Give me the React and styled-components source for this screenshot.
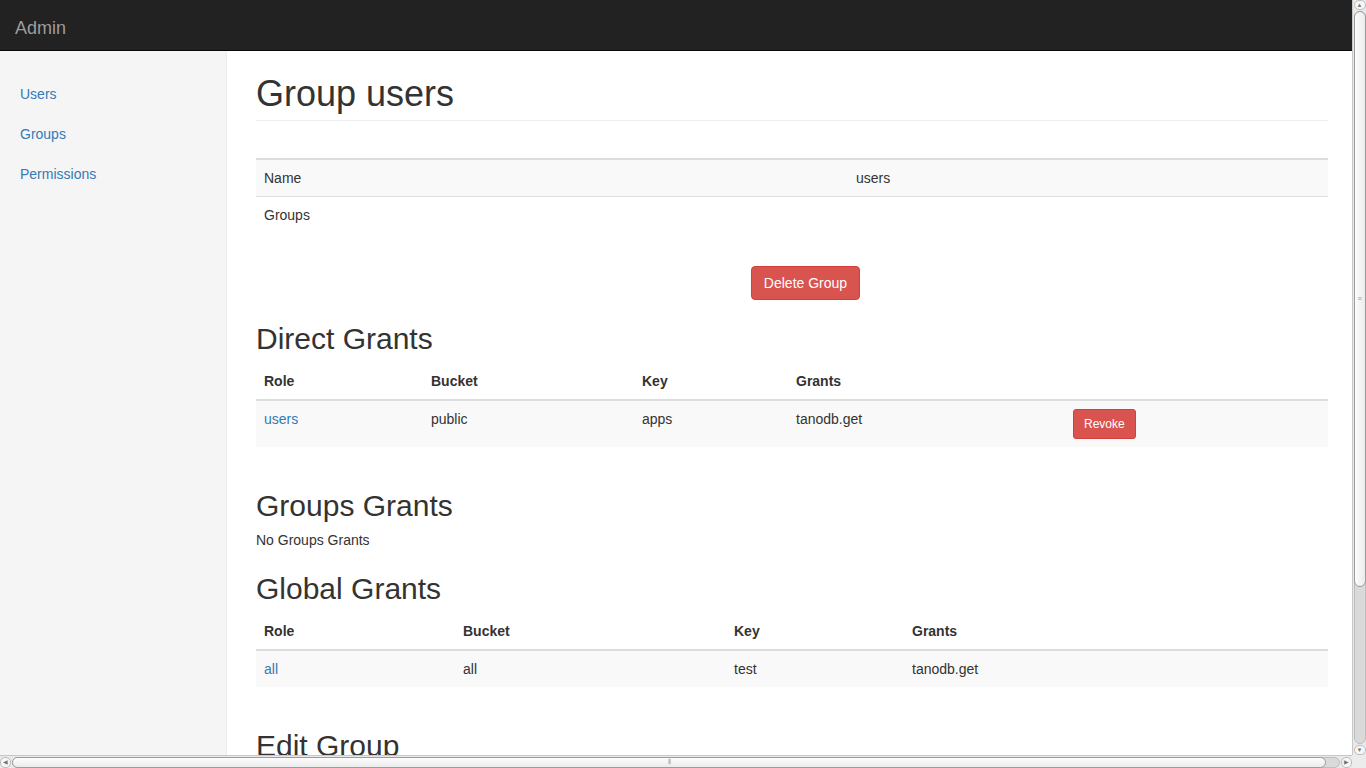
import React from 'react'
import styled, { createGlobalStyle } from "styled-components";

const GlobalStyle = createGlobalStyle`
  html, body {
    margin: 0;
    padding: 0;
    overflow: hidden;
  }
  body {
    font-family: "Liberation Sans", Helvetica, Arial, sans-serif;
    font-size: 14px;
    line-height: 1.42857143;
    color: #333;
    background: #fff;
  }
  * {
    box-sizing: border-box;
  }
`;

const Viewport = styled.div`
  height: 100vh;
  width: 100vw;
  overflow: hidden;
  position: relative;
`;

/* browser scrollbars, drawn over the page */
const ScrollV = styled.div`
  position: fixed;
  top: 0;
  right: 0;
  width: 14px;
  height: 755px;
  background: #e9e9e9;
  border-left: 1px solid #c8c8c8;
  display: flex;
  flex-direction: column;
  align-items: center;
`;

const ScrollH = styled.div`
  position: fixed;
  left: 0;
  bottom: 0;
  width: 1352px;
  height: 13px;
  background: #e9e9e9;
  border-top: 1px solid #c8c8c8;
  display: flex;
  align-items: center;
`;

const Corner = styled.div`
  position: fixed;
  right: 0;
  bottom: 0;
  width: 14px;
  height: 13px;
  background: #ececec;
`;

const Arrow = styled.div`
  flex-shrink: 0;
  width: ${p => (p.$h ? "11px" : "12px")};
  height: ${p => (p.$h ? "11px" : "10px")};
  display: flex;
  align-items: center;
  justify-content: center;
  font-size: 6px;
  line-height: 1;
  color: #777;
  background: #f6f6f6;
  border: 1px solid #bdbdbd;
  border-radius: 5px;
`;

const Track = styled.div`
  flex: 1;
  display: flex;
  flex-direction: ${p => (p.$h ? "row" : "column")};
  width: ${p => (p.$h ? "auto" : "12px")};
  height: ${p => (p.$h ? "11px" : "auto")};
  background: #dadada;
  border: 1px solid #bdbdbd;
  border-radius: 6px;
  margin: ${p => (p.$h ? "0 1px" : "1px 0")};
`;

const Thumb = styled.div`
  flex-shrink: 0;
  display: flex;
  align-items: center;
  justify-content: center;
  font-size: 7px;
  color: #999;
  background: ${p => (p.$h
    ? "linear-gradient(to bottom, #fdfdfd, #ebebeb)"
    : "linear-gradient(to right, #fdfdfd, #ebebeb)")};
  border: 1px solid #9c9c9c;
  border-radius: 6px;
  margin: -1px;
`;

const Navbar = styled.div`
  width: 1366px;
  height: 51px;
  background: #222;
  border-bottom: 1px solid #080808;
  padding: 18px 15px 0;
`;

const Brand = styled.a`
  display: block;
  font-size: 18px;
  line-height: 20px;
  color: #9d9d9d;
  text-decoration: none;
`;

const Layout = styled.div`
  display: flex;
  width: 1366px;
  min-height: 940px;
`;

const Sidebar = styled.div`
  width: 227px;
  flex-shrink: 0;
  background: #f5f5f5;
  border-right: 1px solid #eee;
  padding: 23px 0 20px;
`;

const NavList = styled.ul`
  list-style: none;
  margin: 0;
  padding: 0;
`;

const NavLink = styled.a`
  display: block;
  padding: 10px 20px;
  color: #337ab7;
  text-decoration: none;
`;

const Main = styled.div`
  flex: 1;
  display: flex;
  flex-direction: column;
  padding: 20px 38px 60px 29px;
`;

const PageHeader = styled.h1`
  margin: 0 0 20px;
  padding: 3px 0 6px;
  border-bottom: 1px solid #eee;
  font-size: 36px;
  font-weight: 500;
  line-height: 1.1;
`;

const Heading = styled.h2`
  margin: 20px 0 8px;
  padding-top: 2px;
  font-size: 30px;
  font-weight: 500;
  line-height: 1.1;
`;

const Table = styled.table`
  width: 100%;
  table-layout: fixed;
  border-collapse: collapse;
  border-spacing: 0;
  margin: ${p => p.$top || 0}px 0 20px;
  border-top: ${p => (p.$ruled ? "2px solid #ddd" : "0")};
`;

const Th = styled.th`
  padding: 8px;
  text-align: left;
  font-weight: bold;
  line-height: 20px;
  border-bottom: 2px solid #ddd;
`;

const Row = styled.tr`
  background: ${p => (p.$striped ? "#f9f9f9" : "transparent")};
`;

const Td = styled.td`
  padding: 8px;
  line-height: 20px;
  vertical-align: top;
  border-top: ${p => (p.$first ? "0" : "1px solid #ddd")};
`;

const Link = styled.a`
  color: #337ab7;
  text-decoration: none;
`;

const ActionRow = styled.div`
  display: flex;
  justify-content: center;
  padding-left: 27px;
  margin-top: 13px;
`;

const Button = styled.button`
  font-family: inherit;
  color: #fff;
  background: #d9534f;
  border: 1px solid #d43f3a;
  border-radius: ${p => (p.$small ? 3 : 4)}px;
  font-size: ${p => (p.$small ? 12 : 14)}px;
  line-height: ${p => (p.$small ? 1.5 : 1.42857143)};
  padding: ${p => (p.$small ? "5px 10px" : "6px 12px")};
  cursor: pointer;
`;

const Note = styled.p`
  margin: 0;
`;

const Form = styled.form`
  display: flex;
  flex-direction: column;
  gap: 15px;
`;

const Label = styled.label`
  font-weight: bold;
  display: block;
  margin-bottom: 5px;
`;

const Input = styled.input`
  display: block;
  width: 100%;
  height: 34px;
  padding: 6px 12px;
  font-size: 14px;
  font-family: inherit;
  color: #555;
  border: 1px solid #ccc;
  border-radius: 4px;
`;

const SaveButton = styled.button`
  align-self: flex-start;
  font-family: inherit;
  font-size: 14px;
  padding: 6px 12px;
  color: #fff;
  background: #337ab7;
  border: 1px solid #2e6da4;
  border-radius: 4px;
`;

const directGrants = [
  { role: "users", bucket: "public", key: "apps", grants: "tanodb.get" },
];

const globalGrants = [
  { role: "all", bucket: "all", key: "test", grants: "tanodb.get" },
];

const Scrollbars = () => (
  <>
    <ScrollV>
      <Arrow>▲</Arrow>
      <Track>
        <Thumb style={{ height: 576 }}>≡</Thumb>
      </Track>
      <Arrow>▼</Arrow>
    </ScrollV>
    <ScrollH>
      <Arrow $h>◀</Arrow>
      <Track $h>
        <Thumb $h style={{ width: 1314 }}>⦀</Thumb>
      </Track>
      <Arrow $h>▶</Arrow>
    </ScrollH>
    <Corner />
  </>
);

const App = () => {
  return (
    <Viewport>
      <GlobalStyle />
      <Navbar>
        <Brand href="#">Admin</Brand>
      </Navbar>
      <Layout>
        <Sidebar>
          <NavList>
            <li><NavLink href="#">Users</NavLink></li>
            <li><NavLink href="#">Groups</NavLink></li>
            <li><NavLink href="#">Permissions</NavLink></li>
          </NavList>
        </Sidebar>
        <Main>
          <PageHeader>Group users</PageHeader>

          <Table $top={17} $ruled>
            <colgroup>
              <col style={{ width: 592 }} />
              <col />
            </colgroup>
            <tbody>
              <Row $striped>
                <Td $first>Name</Td>
                <Td $first>users</Td>
              </Row>
              <Row>
                <Td>Groups</Td>
                <Td></Td>
              </Row>
            </tbody>
          </Table>

          <ActionRow>
            <Button>Delete Group</Button>
          </ActionRow>

          <Heading>Direct Grants</Heading>
          <Table>
            <colgroup>
              <col style={{ width: 167 }} />
              <col style={{ width: 211 }} />
              <col style={{ width: 154 }} />
              <col style={{ width: 277 }} />
              <col />
            </colgroup>
            <thead>
              <tr>
                <Th>Role</Th>
                <Th>Bucket</Th>
                <Th>Key</Th>
                <Th>Grants</Th>
                <Th></Th>
              </tr>
            </thead>
            <tbody>
              {directGrants.map((g, i) => (
                <Row $striped={i % 2 === 0} key={i}>
                  <Td $first={i === 0}><Link href="#">{g.role}</Link></Td>
                  <Td $first={i === 0}>{g.bucket}</Td>
                  <Td $first={i === 0}>{g.key}</Td>
                  <Td $first={i === 0}>{g.grants}</Td>
                  <Td $first={i === 0}><Button $small>Revoke</Button></Td>
                </Row>
              ))}
            </tbody>
          </Table>

          <Heading>Groups Grants</Heading>
          <Note>No Groups Grants</Note>

          <Heading>Global Grants</Heading>
          <Table>
            <colgroup>
              <col style={{ width: 199 }} />
              <col style={{ width: 271 }} />
              <col style={{ width: 178 }} />
              <col />
            </colgroup>
            <thead>
              <tr>
                <Th>Role</Th>
                <Th>Bucket</Th>
                <Th>Key</Th>
                <Th>Grants</Th>
              </tr>
            </thead>
            <tbody>
              {globalGrants.map((g, i) => (
                <Row $striped={i % 2 === 0} key={i}>
                  <Td $first={i === 0}><Link href="#">{g.role}</Link></Td>
                  <Td $first={i === 0}>{g.bucket}</Td>
                  <Td $first={i === 0}>{g.key}</Td>
                  <Td $first={i === 0}>{g.grants}</Td>
                </Row>
              ))}
            </tbody>
          </Table>

          <Heading>Edit Group</Heading>
          <Form onSubmit={e => e.preventDefault()}>
            <div>
              <Label htmlFor="name">Name</Label>
              <Input id="name" defaultValue="users" />
            </div>
            <SaveButton type="submit">Save</SaveButton>
          </Form>
        </Main>
      </Layout>
      <Scrollbars />
    </Viewport>
  );
};

export default App;
